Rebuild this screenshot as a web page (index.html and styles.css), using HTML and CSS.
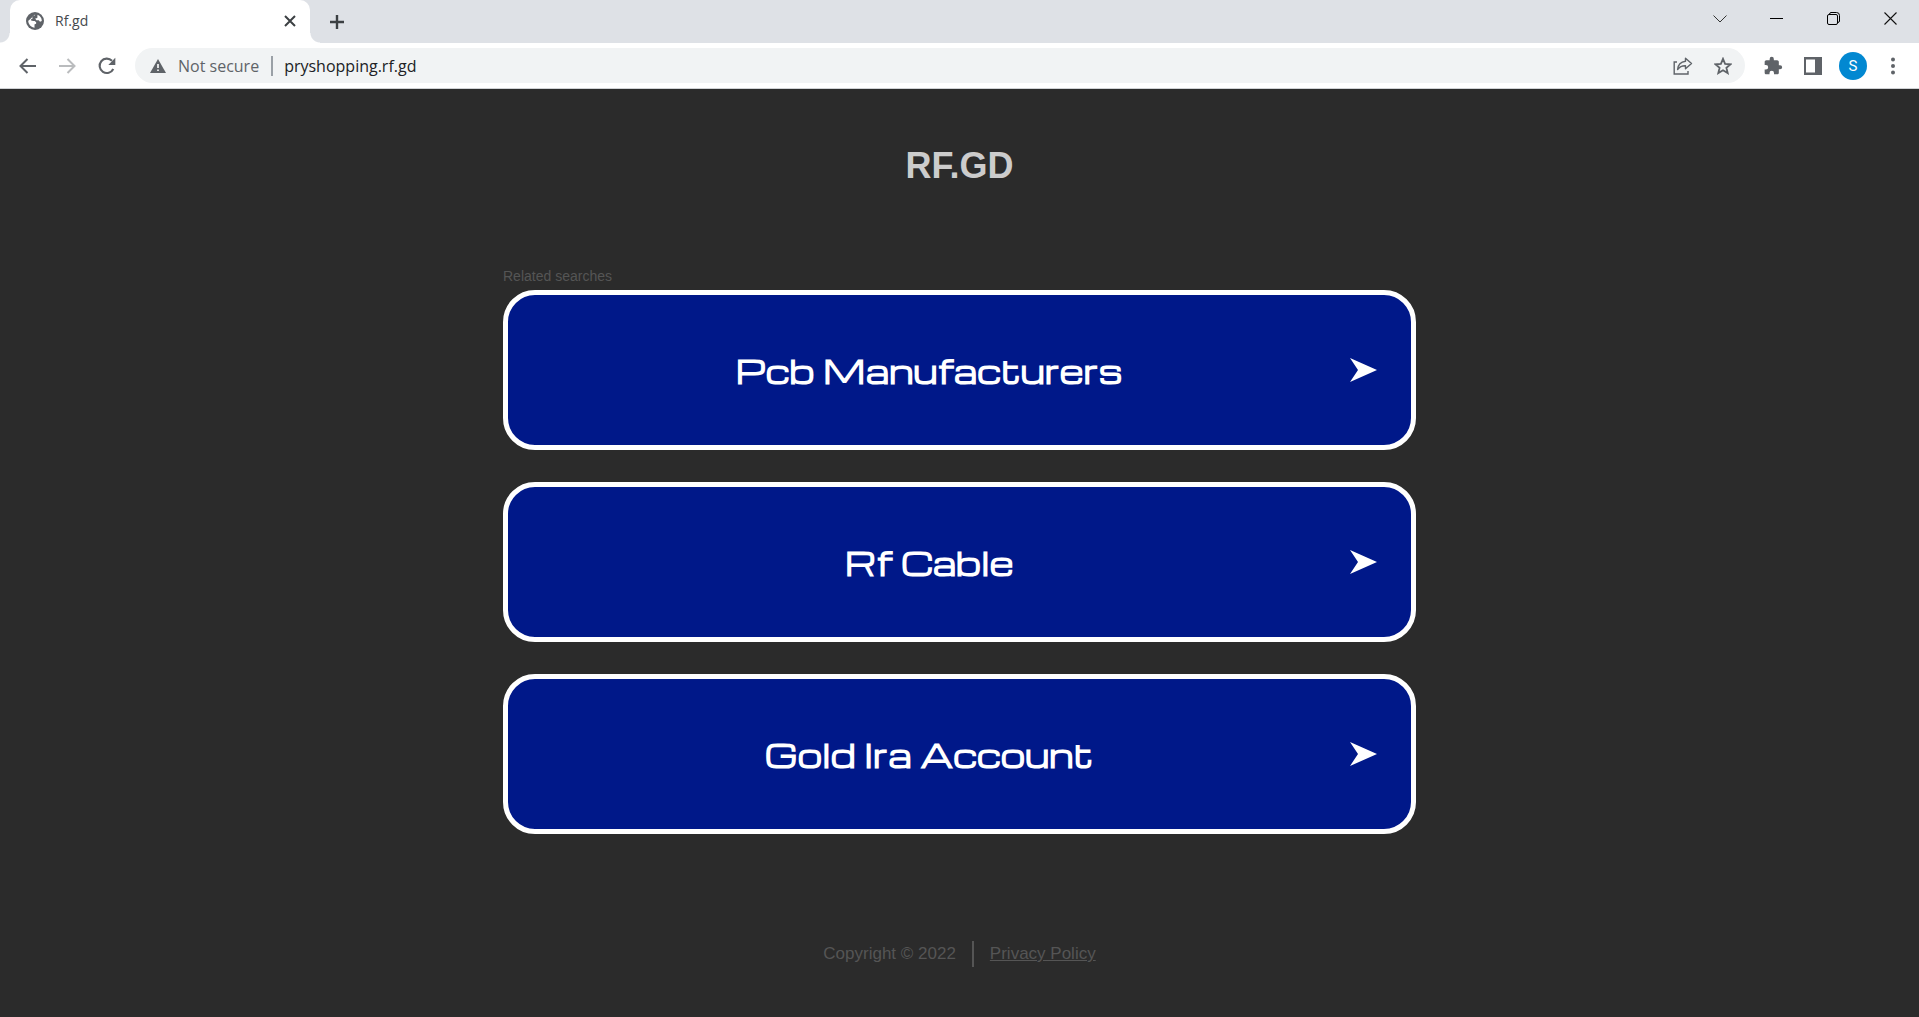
FILE: index.html
```html
<!DOCTYPE html>
<html lang="en">
<head>
    <meta charset="UTF-8">
    <meta name="viewport" content="width=device-width, initial-scale=1.0">
    <title>Rf.gd</title>
    <link rel="stylesheet" href="styles.css">
</head>
<body>

<header class="browser">
    <div class="tab-strip">
        <div class="tab">
            <svg class="favicon" width="18" height="18" viewBox="0 0 18 18" aria-hidden="true">
                <circle cx="9" cy="9" r="9" fill="#5f6368"/>
                <path d="M9.300 2.200 8.700 3.500 6.300 4.800 6.600 6.500 4.900 7.500 5 8.800 8.700 8.900 10.200 10.300 10.100 11.800 8.300 12.600 8.200 15.700A6.800 6.800 0 0 1 2.300 8.600L2.300 8.500A6.800 6.800 0 0 1 2.200 8.500H5.500Q7.500 8.500 7.500 10.500H10.200L8.500 12.500V15.700A6.800 6.800 0 0 1 2.200 9z" fill="#fff"/>
                <path d="M11.500 2.800A6.800 6.800 0 0 1 15.800 9L14 9.700 12.800 8.300 10.300 8.200 9.200 6.600 11.300 5.900z" fill="#fff"/>
            </svg>
            <span class="tab-title">Rf.gd</span>
            <button class="tab-close" aria-label="Close tab">
                <svg width="12" height="12" viewBox="0 0 12 12"><path d="M1 1l10 10M11 1L1 11" stroke="#3c4043" stroke-width="2"/></svg>
            </button>
        </div>
        <button class="new-tab" aria-label="New tab">
            <svg width="16" height="16" viewBox="0 0 16 16"><path d="M8 1v14M1 8h14" stroke="#3c4043" stroke-width="2.400"/></svg>
        </button>
        <div class="window-buttons">
            <button aria-label="Search tabs">
                <svg width="14" height="8" viewBox="0 0 14 8"><path d="M.5 .5L7 7 13.500 .5" fill="none" stroke="#333" stroke-width="1"/></svg>
            </button>
            <button aria-label="Minimize">
                <svg width="13" height="13" viewBox="0 0 13 13"><path d="M0 6.500h13" stroke="#000"/></svg>
            </button>
            <button aria-label="Restore">
                <svg width="13" height="13" viewBox="0 0 13 13"><g fill="none" stroke="#000"><rect x=".5" y="2.500" width="10" height="10" rx="1.500"/><path d="M2.500 2.500Q2.500 .5 4 .5H9.500Q12.500 .5 12.500 3.500V9Q12.500 10.500 10.500 10.500"/></g></svg>
            </button>
            <button aria-label="Close">
                <svg width="13" height="13" viewBox="0 0 13 13"><path d="M.5 .5l12 12M12.500 .5l-12 12" stroke="#111" stroke-width="1.100"/></svg>
            </button>
        </div>
    </div>

    <div class="toolbar">
        <button class="tool" aria-label="Back">
            <svg width="17" height="16" viewBox="0 0 17 16"><path d="M17 8H2M8.500 1L1.500 8l7 7" fill="none" stroke="#5f6368" stroke-width="2"/></svg>
        </button>
        <button class="tool" aria-label="Forward" disabled>
            <svg width="17" height="16" viewBox="0 0 17 16"><path d="M0 8h15M8.500 1l7 7-7 7" fill="none" stroke="#babcbe" stroke-width="2"/></svg>
        </button>
        <button class="tool" aria-label="Reload">
            <svg width="18" height="18" viewBox="0 0 18 18"><path d="M15.300 12A7.200 7.200 0 1 1 14 3.800" fill="none" stroke="#5f6368" stroke-width="2.100"/><path d="M17.300 .8V8h-7z" fill="#5f6368"/></svg>
        </button>
        <div class="omnibox">
            <svg width="16" height="14" viewBox="0 0 16 14" aria-hidden="true"><path d="M8 0l8 14H0z" fill="#5f6368"/><path d="M8 5v4M8 10.500v1.600" stroke="#fff" stroke-width="1.600"/></svg>
            <label class="security" for="address">Not secure</label>
            <input type="text" id="address" class="address" value="pryshopping.rf.gd">
            <button class="tool" aria-label="Share">
                <svg width="20" height="18" viewBox="0 0 20 18"><path d="M4 5H1.200v12H15v-3" fill="none" stroke="#5f6368" stroke-width="1.400"/><path d="M12.500 1.200L18.500 6.500 12.500 11.800V8.800Q7.500 8.600 4.600 12.500 5.300 5 12.500 4.200z" fill="none" stroke="#5f6368" stroke-width="1.400" stroke-linejoin="round"/></svg>
            </button>
            <button class="tool" aria-label="Bookmark this tab">
                <svg width="18" height="18" viewBox="0 0 18 18"><path d="M9 1.800l2.100 5 5.400.5-4.100 3.500 1.300 5.300L9 13.300l-4.700 2.800 1.300-5.300L1.500 7.300l5.400-.5z" fill="none" stroke="#5f6368" stroke-width="1.800"/></svg>
            </button>
        </div>
        <button class="tool" aria-label="Extensions">
            <svg width="20" height="20" viewBox="0 0 24 24"><path d="M20.500 11H19V7c0-1.100-.9-2-2-2h-4V3.500a2.500 2.500 0 0 0-5 0V5H4c-1.100 0-2 .9-2 2v3.800h1.500a2.700 2.700 0 0 1 0 5.400H2V20c0 1.100.9 2 2 2h3.800v-1.500a2.700 2.700 0 0 1 5.400 0V22H17c1.100 0 2-.9 2-2v-4h1.500a2.500 2.500 0 0 0 0-5z" fill="#5f6368"/></svg>
        </button>
        <button class="tool" aria-label="Side panel">
            <svg width="18" height="18" viewBox="0 0 18 18"><path d="M0 0h18v18H0zM2 2.500v13h9v-13z" fill="#5f6368" fill-rule="evenodd"/></svg>
        </button>
        <button class="tool" aria-label="Profile"><span class="avatar">S</span></button>
        <button class="tool" aria-label="Menu">
            <svg width="4" height="18" viewBox="0 0 4 18"><g fill="#5f6368"><circle cx="2" cy="2.500" r="2"/><circle cx="2" cy="9" r="2"/><circle cx="2" cy="15.500" r="2"/></g></svg>
        </button>
    </div>
</header>

<main class="container">
    <h1>RF.GD</h1>

    <p class="related">Related searches</p>
    <nav class="searches">
        <a class="search" href="#">
            <span class="search-text">Pcb Manufacturers</span>
            <svg width="27" height="24" viewBox="0 0 27 24"><path d="M0 0l27 12L0 24l8-12z" fill="#fff"/></svg>
        </a>
        <a class="search" href="#">
            <span class="search-text">Rf Cable</span>
            <svg width="27" height="24" viewBox="0 0 27 24"><path d="M0 0l27 12L0 24l8-12z" fill="#fff"/></svg>
        </a>
        <a class="search" href="#">
            <span class="search-text">Gold Ira Account</span>
            <svg width="27" height="24" viewBox="0 0 27 24"><path d="M0 0l27 12L0 24l8-12z" fill="#fff"/></svg>
        </a>
    </nav>
</main>

<footer>
    <span>Copyright © 2022</span>
    <span class="divider"></span>
    <a href="#">Privacy Policy</a>
</footer>

</body>
</html>
```
FILE: styles.css
```css
* {
    box-sizing: border-box;
}

body {
    font-family: "Liberation Sans", Arial, sans-serif;
    background-color: #2b2b2b;
    margin: 0;
    color: #555;
}

button {
    display: flex;
    align-items: center;
    justify-content: center;
    padding: 0;
    border: none;
    background: none;
    font-family: inherit;
}

/* Browser bar */
.browser {
    font-family: "Open Sans", "Segoe UI", sans-serif;
    background-color: #fff;
    border-bottom: 1px solid #d0d2d5;
}

.tab-strip {
    display: flex;
    height: 43px;
    padding-left: 10px;
    background-color: #dee1e6;
}

.tab {
    position: relative;
    display: flex;
    align-items: center;
    width: 300px;
    padding: 0 12px 2px 16px;
    border-radius: 10px 10px 0 0;
    background-color: #fff;
}

/* curved feet of the tab */
.tab::before,
.tab::after {
    content: "";
    position: absolute;
    bottom: 0;
    width: 10px;
    height: 10px;
}

.tab::before {
    left: -10px;
    background: radial-gradient(circle at 0 0, #dee1e6 9px, #fff 10px);
}

.tab::after {
    right: -10px;
    background: radial-gradient(circle at 100% 0, #dee1e6 9px, #fff 10px);
}

.tab-title {
    flex: 1;
    margin-left: 11px;
    font-size: 14px;
    color: #45494d;
}

.tab-close {
    width: 16px;
    height: 16px;
}

.new-tab {
    width: 34px;
    margin-left: 10px;
}

.window-buttons {
    display: flex;
    margin-left: auto;
}

.window-buttons button {
    width: 57px;
    height: 37px;
}

.toolbar {
    display: flex;
    align-items: center;
    height: 45px;
    padding: 0 6px 0 7px;
}

.tool {
    width: 40px;
    height: 35px;
}

.omnibox {
    display: flex;
    flex: 1;
    align-items: center;
    height: 35px;
    margin: 0 8px;
    padding: 0 2px 0 15px;
    border-radius: 18px;
    background-color: #f1f3f4;
    font-size: 16px;
}

.security {
    margin-left: 12px;
    padding-right: 12px;
    border-right: 2px solid #9aa0a6;
    line-height: 20px;
    color: #5f6368;
}

.address {
    flex: 1;
    padding: 0 0 0 11px;
    border: none;
    outline: none;
    background: none;
    font-family: inherit;
    font-size: 16px;
    color: #202124;
}

.avatar {
    width: 28px;
    height: 28px;
    border-radius: 50%;
    background-color: #0288d1;
    font-family: Roboto, sans-serif;
    font-size: 15px;
    line-height: 28px;
    color: #fff;
}

/* Page */
.container {
    width: 100%;
    max-width: 913px;
    margin: 0 auto;
}

h1 {
    margin: 0;
    padding: 57px 0 82px;
    font-size: 36px;
    line-height: 40px;
    text-align: center;
    color: #ccc;
}

.related {
    margin: 0;
    padding-bottom: 6px;
    font-size: 14px;
    line-height: 16px;
}

.searches {
    display: flex;
    flex-direction: column;
    gap: 32px;
}

.search {
    display: flex;
    align-items: center;
    min-height: 160px;
    padding-right: 34px;
    border: 5px solid #fff;
    border-radius: 32px;
    background-color: #001889;
    color: #fff;
    text-decoration: none;
}

.search:hover {
    background-color: #0022b0;
}

.search-text {
    flex: 1;
    font-family: Michroma, "DejaVu Sans", sans-serif;
    font-size: 31px;
    font-weight: bold;
    text-align: center;
}

footer {
    display: flex;
    align-items: center;
    justify-content: center;
    gap: 16px;
    padding: 107px 0 40px;
    font-size: 17px;
}

.divider {
    width: 2px;
    height: 26px;
    background-color: #555;
}

footer a {
    color: #555;
}
```
